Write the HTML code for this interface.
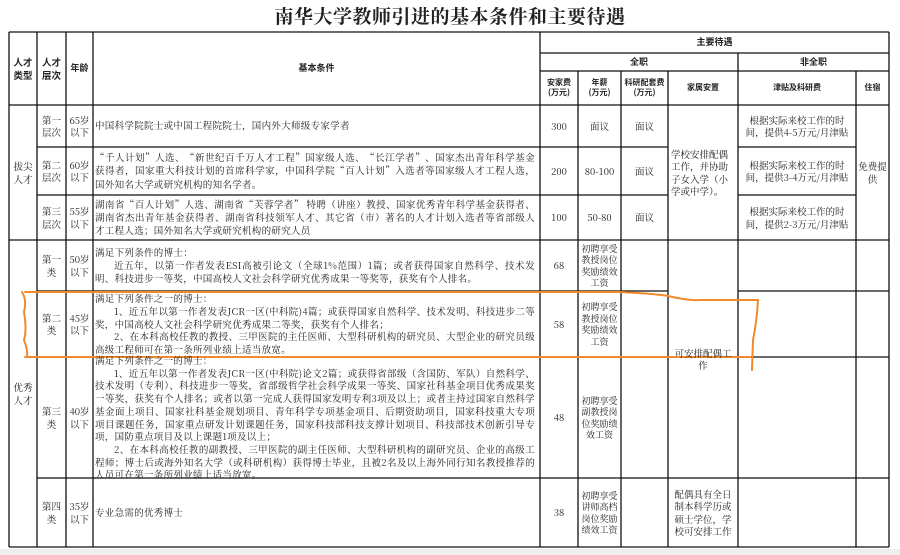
<!DOCTYPE html>
<html><head><meta charset="utf-8"><style>
body{margin:0;width:900px;height:555px;background:#fff;overflow:hidden;position:relative;font-family:"Noto Serif CJK SC","Liberation Serif",serif;color:#222}
.c{position:absolute;display:flex;align-items:center;justify-content:center;text-align:center;font-size:9.5px;line-height:12.5px;box-sizing:border-box}
.l{position:absolute;font-size:9.5px;letter-spacing:0.3px;line-height:13.2px;text-align:justify;display:flex;flex-direction:column;justify-content:center;box-sizing:border-box;padding:0 5px 0 2px}
.b{font-weight:bold;font-family:"Noto Sans CJK SC","Liberation Sans",sans-serif}
.h{font-size:8px;line-height:10px}
.s{font-size:9px;line-height:11.5px;padding:0 1px}
.t{position:absolute;left:0;top:3px;width:900px;text-align:center;font-size:19px;font-weight:bold;font-family:"Noto Serif CJK SC","Liberation Serif",serif;letter-spacing:0.5px;line-height:26px}
p{margin:0}
.in{text-indent:2em}
</style></head><body>
<div class="t">南华大学教师引进的基本条件和主要待遇</div>
<svg style="position:absolute;left:0;top:0" width="900" height="555">
<g stroke="#111" stroke-width="1.3" fill="none">
<line x1="9" y1="32" x2="9" y2="547"/><line x1="37" y1="32" x2="37" y2="547"/><line x1="66" y1="32" x2="66" y2="547"/><line x1="93" y1="32" x2="93" y2="547"/><line x1="540" y1="32" x2="540" y2="547"/>
<line x1="578" y1="71" x2="578" y2="547"/><line x1="621" y1="71" x2="621" y2="547"/><line x1="668" y1="71" x2="668" y2="547"/><line x1="738" y1="53" x2="738" y2="547"/><line x1="856" y1="71" x2="856" y2="547"/><line x1="889" y1="32" x2="889" y2="547"/>
<line x1="9" y1="32" x2="889" y2="32"/><line x1="540" y1="53" x2="889" y2="53"/><line x1="540" y1="71" x2="889" y2="71"/><line x1="9" y1="105" x2="889" y2="105"/>
<line x1="37" y1="147" x2="668" y2="147"/><line x1="738" y1="147" x2="856" y2="147"/>
<line x1="37" y1="195" x2="668" y2="195"/><line x1="738" y1="195" x2="856" y2="195"/>
<line x1="9" y1="240" x2="889" y2="240"/>
<line x1="37" y1="291" x2="668" y2="291"/><line x1="738" y1="291" x2="889" y2="291"/>
<line x1="37" y1="357" x2="668" y2="357"/><line x1="738" y1="357" x2="889" y2="357"/>
<line x1="37" y1="478" x2="889" y2="478"/><line x1="9" y1="547" x2="889" y2="547"/>
</g>
<g stroke="#f08a2c" stroke-width="2" fill="none" stroke-linecap="round">
<path d="M25 292 L300 292 L560 292 L620 292 Q660 294 668 296 Q690 301 700 300 L758 300 Q757 320 753 340 L752 370"/>
<path d="M25 357 L750 357"/>
<path d="M22 292 Q27 300 24 312 Q27 330 24 340 Q28 350 27 357"/>
</g>
<rect x="0" y="549" width="900" height="6" fill="#eee"/>
</svg>
<div class="c b" style="left:9px;top:32px;width:28px;height:73px;font-size:9.5px">人才<br>类型</div>
<div class="c b" style="left:37px;top:32px;width:29px;height:73px;font-size:9.5px">人才<br>层次</div>
<div class="c b" style="left:66px;top:32px;width:27px;height:73px;font-size:9px">年龄</div>
<div class="c b" style="left:93px;top:32px;width:447px;height:73px;font-size:9px">基本条件</div>
<div class="c b" style="left:540px;top:32px;width:349px;height:21px;font-size:9px">主要待遇</div>
<div class="c b" style="left:540px;top:53px;width:198px;height:18px;font-size:9px">全职</div>
<div class="c b" style="left:738px;top:53px;width:151px;height:18px;font-size:9px">非全职</div>
<div class="c b h" style="left:540px;top:71px;width:38px;height:34px">安家费<br>(万元)</div>
<div class="c b h" style="left:578px;top:71px;width:43px;height:34px">年薪<br>(万元)</div>
<div class="c b h" style="left:621px;top:71px;width:47px;height:34px">科研配套费<br>(万元)</div>
<div class="c b h" style="left:668px;top:71px;width:70px;height:34px">家属安置</div>
<div class="c b h" style="left:738px;top:71px;width:118px;height:34px">津贴及科研费</div>
<div class="c b h" style="left:856px;top:71px;width:33px;height:34px">住宿</div>
<div class="c" style="left:9px;top:105px;width:28px;height:135px">拔尖<br>人才</div>
<div class="c" style="left:37px;top:105px;width:29px;height:42px">第一<br>层次</div>
<div class="c" style="left:66px;top:105px;width:27px;height:42px">65岁<br>以下</div>
<div class="l" style="left:93px;top:105px;width:447px;height:42px">中国科学院院士或中国工程院院士，国内外大师级专家学者</div>
<div class="c" style="left:540px;top:105px;width:38px;height:42px">300</div>
<div class="c" style="left:578px;top:105px;width:43px;height:42px">面议</div>
<div class="c" style="left:621px;top:105px;width:47px;height:42px">面议</div>
<div class="c" style="left:37px;top:147px;width:29px;height:48px">第二<br>层次</div>
<div class="c" style="left:66px;top:147px;width:27px;height:48px">60岁<br>以下</div>
<div class="l" style="left:93px;top:147px;width:447px;height:48px">“千人计划”人选、“新世纪百千万人才工程”国家级人选、“长江学者”、国家杰出青年科学基金获得者，国家重大科技计划的首席科学家，中国科学院“百人计划”入选者等国家级人才工程人选，国外知名大学或研究机构的知名学者。</div>
<div class="c" style="left:540px;top:147px;width:38px;height:48px">200</div>
<div class="c" style="left:578px;top:147px;width:43px;height:48px">80-100</div>
<div class="c" style="left:621px;top:147px;width:47px;height:48px">面议</div>
<div class="c" style="left:37px;top:195px;width:29px;height:45px">第三<br>层次</div>
<div class="c" style="left:66px;top:195px;width:27px;height:45px">55岁<br>以下</div>
<div class="l" style="left:93px;top:195px;width:447px;height:45px">湖南省“百人计划”人选、湖南省“芙蓉学者” 特聘（讲座）教授、国家优秀青年科学基金获得者、湖南省杰出青年基金获得者、湖南省科技领军人才、其它省（市）著名的人才计划入选者等省部级人才工程人选；国外知名大学或研究机构的研究人员</div>
<div class="c" style="left:540px;top:195px;width:38px;height:45px">100</div>
<div class="c" style="left:578px;top:195px;width:43px;height:45px">50-80</div>
<div class="c" style="left:621px;top:195px;width:47px;height:45px">面议</div>
<div class="c" style="left:668px;top:105px;width:70px;height:135px;text-align:left;padding:0 3px">学校安排配偶工作，并协助子女入学（小学或中学）。</div>
<div class="c" style="left:738px;top:105px;width:118px;height:42px;padding:0 4px">根据实际来校工作的时间，提供4-5万元/月津贴</div>
<div class="c" style="left:738px;top:147px;width:118px;height:48px;padding:0 4px">根据实际来校工作的时间，提供3-4万元/月津贴</div>
<div class="c" style="left:738px;top:195px;width:118px;height:45px;padding:0 4px">根据实际来校工作的时间，提供2-3万元/月津贴</div>
<div class="c" style="left:856px;top:105px;width:33px;height:135px;padding:0 2px">免费提供</div>
<div class="c" style="left:9px;top:240px;width:28px;height:307px">优秀<br>人才</div>
<div class="c" style="left:37px;top:240px;width:29px;height:51px">第一<br>类</div>
<div class="c" style="left:66px;top:240px;width:27px;height:51px">50岁<br>以下</div>
<div class="l" style="left:93px;top:240px;width:447px;height:51px"><p>满足下列条件的博士：</p><p class="in">近五年，以第一作者发表ESI高被引论文（全球1%范围）1篇；或者获得国家自然科学、技术发明、科技进步一等奖，中国高校人文社会科学研究优秀成果一等奖等，获奖有个人排名。</p></div>
<div class="c" style="left:540px;top:240px;width:38px;height:51px">68</div>
<div class="c s" style="left:578px;top:240px;width:43px;height:51px">初聘享受<br>教授岗位<br>奖励绩效<br>工资</div>
<div class="c" style="left:37px;top:291px;width:29px;height:66px">第二<br>类</div>
<div class="c" style="left:66px;top:291px;width:27px;height:66px">45岁<br>以下</div>
<div class="l" style="left:93px;top:291px;width:447px;height:66px;line-height:12.8px"><p>满足下列条件之一的博士：</p><p class="in">1、近五年以第一作者发表JCR一区(中科院)4篇；或获得国家自然科学、技术发明、科技进步二等奖，中国高校人文社会科学研究优秀成果二等奖，获奖有个人排名；</p><p class="in">2、在本科高校任教的教授、三甲医院的主任医师、大型科研机构的研究员、大型企业的研究员级高级工程师可在第一条所列业绩上适当放宽。</p></div>
<div class="c" style="left:540px;top:291px;width:38px;height:66px">58</div>
<div class="c s" style="left:578px;top:291px;width:43px;height:66px">初聘享受<br>教授岗位<br>奖励绩效<br>工资</div>
<div class="c" style="left:37px;top:357px;width:29px;height:121px">第三<br>类</div>
<div class="c" style="left:66px;top:357px;width:27px;height:121px">40岁<br>以下</div>
<div class="l" style="left:93px;top:357px;width:447px;height:121px;line-height:12.7px"><p>满足下列条件之一的博士：</p><p class="in">1、近五年以第一作者发表JCR一区(中科院)论文2篇；或获得省部级（含国防、军队）自然科学、技术发明（专利）、科技进步一等奖，省部级哲学社会科学成果一等奖、国家社科基金项目优秀成果奖一等奖，获奖有个人排名；或者以第一完成人获得国家发明专利3项及以上；或者主持过国家自然科学基金面上项目、国家社科基金规划项目、青年科学专项基金项目、后期资助项目，国家科技重大专项项目课题任务，国家重点研发计划课题任务，国家科技部科技支撑计划项目、科技部技术创新引导专项，国防重点项目及以上课题1项及以上；</p><p class="in">2、在本科高校任教的副教授、三甲医院的副主任医师、大型科研机构的副研究员、企业的高级工程师；博士后或海外知名大学（或科研机构）获得博士毕业，且被2名及以上海外同行知名教授推荐的人员可在第一条所列业绩上适当放宽。</p></div>
<div class="c" style="left:540px;top:357px;width:38px;height:121px">48</div>
<div class="c s" style="left:578px;top:357px;width:43px;height:121px">初聘享受<br>副教授岗<br>位奖励绩<br>效工资</div>
<div class="c" style="left:668px;top:240px;width:70px;height:238px;padding:0 3px">可安排配偶工作</div>
<div class="c" style="left:37px;top:478px;width:29px;height:69px">第四<br>类</div>
<div class="c" style="left:66px;top:478px;width:27px;height:69px">35岁<br>以下</div>
<div class="l" style="left:93px;top:478px;width:447px;height:69px">专业急需的优秀博士</div>
<div class="c" style="left:540px;top:478px;width:38px;height:69px">38</div>
<div class="c s" style="left:578px;top:478px;width:43px;height:69px">初聘享受<br>讲师高档<br>岗位奖励<br>绩效工资</div>
<div class="c" style="left:668px;top:478px;width:70px;height:69px;padding:0 3px">配偶具有全日制本科学历或硕士学位，学校可安排工作</div>
</body></html>
